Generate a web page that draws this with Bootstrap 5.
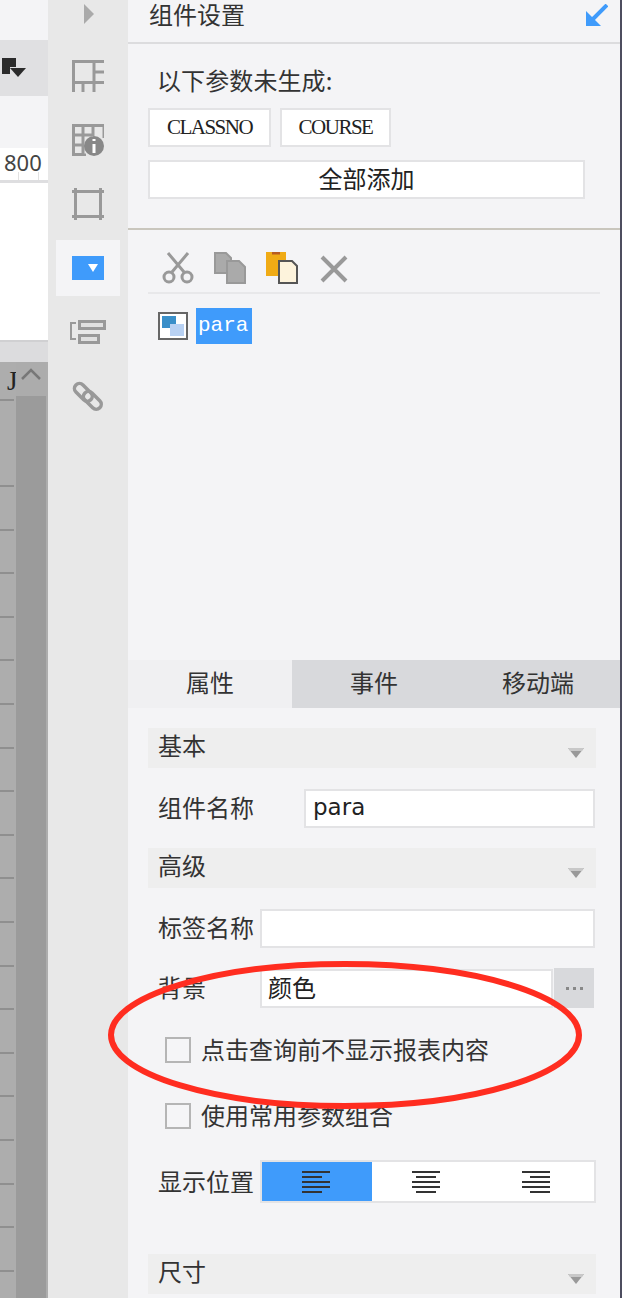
<!DOCTYPE html>
<html lang="zh">
<head>
<meta charset="utf-8">
<title>组件设置</title>
<link href="https://cdn.jsdelivr.net/npm/bootstrap@5.3.0/dist/css/bootstrap.min.css" rel="stylesheet">
<style>
html,body{margin:0;height:1298px;overflow:hidden;background:#f4f4f6}
body{font-family:"Noto Sans CJK SC","Liberation Sans",sans-serif;font-size:24px;color:#333}
.app{width:622px;height:1298px}
svg{display:block;flex:none}
/* left column */
.lc{width:48px;flex:none;background:#f4f4f6}
.lc-tool{height:56px;margin-top:40px;background:#e0e0e2;padding:18px 0 0 2px}
.lc-gap{height:52px}
.lc-ruler{height:35px;font:22px/29px "Noto Sans",sans-serif;color:#444;padding-left:4px;border-bottom:3px solid #dedee0;background:linear-gradient(#e2e2e2,#e2e2e2) 18px 24px/1px 8px no-repeat,linear-gradient(#e2e2e2,#e2e2e2) 38px 24px/1px 8px no-repeat,#fff}
.lc-white{height:157px;background:#fff}
.lc-bar{height:22px;background:#dcdcde;border-top:2px solid #d0d0d2}
.lc-grid{flex:1;background:#adadad}
.lc-names{width:16px;flex:none}
.lc-head{height:39px;border-bottom:2px solid #8f8f8f;width:14px;font:27px/28px "Liberation Serif",serif;color:#222;padding:5px 0 0 7px;overflow:visible;white-space:nowrap}
.lc-tick{height:43.6px;width:14px;border-bottom:2px solid #8f8f8f}
.lc-tick.wide{height:86px}
.lc-track{width:30px;flex:none;background:#9b9b9b}
.lc-up{height:34px;background:#acacac;display:flex;justify-content:center;padding-top:6px}
/* rail */
.rail{width:80px;flex:none;background:#e8e8e8;padding-top:4px}
.rail-cell{display:flex;justify-content:center;height:64px}
.rail-cell.frame{height:52px}
.rail-cell.param{height:60px;padding-top:24px}
.rail-cell.chain{height:auto;padding-top:24px}
.rail-active{width:64px;height:56px;margin-left:8px;background:#f4f4f6;display:flex;align-items:center;justify-content:center}
.mt-tri{padding-left:36px;height:56px}
/* panel */
.panel{width:494px;flex:none;background:#f4f4f6;border-right:2px solid #4d4d5f}
.upper{height:660px}
.hdr{height:44px;border-bottom:2px solid #dcdcde;padding:0 12px 0 21px}
.hdr span{line-height:32px;font-family:"Liberation Sans","Noto Sans CJK SC",sans-serif}
.gen{height:186px;border-bottom:2px solid #c9c6bd;padding:22px 0 0 20px}
.gen-title{line-height:28px;padding-left:9px;margin-bottom:14px;letter-spacing:.1px}
.pbtn{height:39px;border:2px solid #e3e3e5;border-radius:0;background:#fff;color:#222;padding:0;font:21px/33px "Liberation Serif",serif;letter-spacing:-1.5px}
.pbtn:hover{background:#fff;border-color:#e3e3e5;color:#222}
.w-a{width:123px}.w-b{width:111px;margin-left:9px}
.pbtn.all{display:block;width:437px;margin-top:13px;font:24px/31px "Noto Sans CJK SC",sans-serif;letter-spacing:0;padding-bottom:4px}
.tools{margin:22px 20px 0;height:42px;border-bottom:2px solid #e8e8ea;padding-left:14px;gap:20px}
.x-tool{margin:3px 0 0 2px}
.tree{margin:14px 0 0 30px;gap:8px;align-items:center}
.para-sel{width:56px;height:36px;background:#3f9bfb;color:#fff;font:21px/36px "Liberation Mono",monospace;padding-left:2px}
/* tabs */
.ptabs{height:48px;flex-wrap:nowrap}
.ptabs .nav-link{height:48px;width:164px;padding:0;text-align:center;line-height:44px;background:#d8d9dc;color:#333;border-radius:0}
.ptabs .nav-link.active{background:#f0f0f2}
.form-area{padding:20px 24px 0 20px}
.sec{height:40px;background:#eee;padding-left:10px;line-height:33px}
.sec svg{margin-right:12px;margin-top:20px}
.frow{margin-top:20px;height:40px;margin-bottom:20px}
.frow-label{padding:0 0 2px 10px;white-space:nowrap}
.finput{height:39px;border:2px solid #e3e3e5;border-radius:0;background:#fff;color:#222;padding:0 7px 4px;font-size:24px}
.finput:focus{box-shadow:none;border-color:#e3e3e5}
.name-in{width:291px;margin-left:50px;font-family:"DejaVu Sans",sans-serif;font-size:23px;padding-bottom:2px}
.label-in{width:335px;margin-left:6px}
.bg-in{width:293px;margin-left:54px;padding-left:6px}
.more{width:40px;height:40px;margin-left:1px;background:#d8d9dc;display:flex;align-items:center;justify-content:center;gap:4px}
.more i{width:3px;height:3px;background:#888;display:block}
.chk{height:26px;padding-left:17px;gap:10px;margin-bottom:40px;line-height:26px}
.chk span{padding-bottom:3px}
.chk.first{margin-top:29px}
.chk .form-check-input{width:26px;height:26px;margin:0;border:2px solid #b5b5b5;border-radius:0;background-color:#f5f5f7;flex:none}
.pos-row{height:43px;margin-top:-9px}
.pos-group{width:336px;height:43px;margin-left:6px;border:2px solid #e3e3e5;background:#fff}
.pos-group>div{width:110px;display:flex;align-items:center;justify-content:center;padding-right:2px}
.pos-group>.on{background:#3f9bfb}
.last{margin-top:51px}
.ring{position:absolute;left:0;top:0;pointer-events:none}
</style>
</head>
<body>
<div class="app d-flex position-relative">
  <div class="lc d-flex flex-column">
    <div class="lc-tool">
      <svg width="26" height="20" viewBox="0 0 26 20"><path d="M0 0H14V9H8V16H0Z" fill="#2b2b2b"/><path d="M8 10H24L16 19Z" fill="#2b2b2b"/></svg>
    </div>
    <div class="lc-gap"></div>
    <div class="lc-ruler">800</div>
    <div class="lc-white"></div>
    <div class="lc-bar"></div>
    <div class="lc-grid d-flex">
      <div class="lc-names">
        <div class="lc-head">J</div>
        <div class="lc-tick wide"></div>
        <div class="lc-tick"></div><div class="lc-tick"></div><div class="lc-tick"></div><div class="lc-tick"></div><div class="lc-tick"></div><div class="lc-tick"></div><div class="lc-tick"></div><div class="lc-tick"></div><div class="lc-tick"></div><div class="lc-tick"></div><div class="lc-tick"></div><div class="lc-tick"></div><div class="lc-tick"></div><div class="lc-tick"></div><div class="lc-tick"></div><div class="lc-tick"></div><div class="lc-tick"></div><div class="lc-tick"></div>
      </div>
      <div class="lc-track">
        <div class="lc-up"><svg width="20" height="12" viewBox="0 0 20 12"><path d="M1 11L10 2L19 11" fill="none" stroke="#777" stroke-width="2.5"/></svg></div>
      </div>
    </div>
  </div>

  <div class="rail">
    <div class="mt-tri"><svg width="10" height="20" viewBox="0 0 10 20"><path d="M0 0L10 10L0 20Z" fill="#aaa"/></svg></div>
    <div class="rail-cell"><svg width="32" height="32" viewBox="0 0 32 32" fill="none" stroke="#999" stroke-width="3"><path d="M1.500 32V1.500H32M1.500 22.500H32M22 1V32M11 22V32M22 12H32"/></svg></div>
    <div class="rail-cell"><svg width="32" height="32" viewBox="0 0 32 32" fill="none" stroke="#999" stroke-width="3"><path d="M1.500 32V1.500H32V14M1 11H20M1 21H12M11 1V31H14M21 1V12M1 30.500H12"/><circle cx="22" cy="22" r="10" fill="#888" stroke="none"/><path d="M22 15V17M22 20V29" stroke="#fff" stroke-width="3"/></svg></div>
    <div class="rail-cell frame"><svg width="32" height="32" viewBox="0 0 32 32" fill="none" stroke="#999" stroke-width="3"><path d="M0 3.500H32M0 28.500H32M3.500 0V32M28.500 0V32"/></svg></div>
    <div class="rail-active"><svg width="32" height="24" viewBox="0 0 32 24"><rect width="32" height="24" fill="#3f9bfb"/><path d="M16 8H26L21 16Z" fill="#fff"/></svg></div>
    <div class="rail-cell param"><svg width="36" height="24" viewBox="0 0 36 24" fill="none" stroke="#999"><path d="M6 3H1V19H6" stroke-width="2"/><rect x="9.500" y="1.500" width="25" height="7" fill="#e0e0e0" stroke-width="3"/><rect x="9.500" y="15.500" width="19" height="7" fill="#e0e0e0" stroke-width="3"/></svg></div>
    <div class="rail-cell chain"><svg width="32" height="32" viewBox="0 0 32 32" fill="none" stroke="#999" stroke-width="3.500"><rect x="1" y="7" width="21" height="10" rx="5" transform="rotate(45 11 12)"/><rect x="10" y="15" width="21" height="10" rx="5" transform="rotate(45 20 20)"/></svg></div>
  </div>

  <div class="panel">
    <div class="upper">
      <div class="hdr d-flex justify-content-between">
        <span>组件设置</span>
        <svg class="mt-1" width="22" height="22" viewBox="0 0 22 22"><path d="M21 1L5 17" stroke="#3f9bfb" stroke-width="4" fill="none"/><path d="M0 7V22H15Z" fill="#3f9bfb"/></svg>
      </div>
      <div class="gen">
        <div class="gen-title">以下参数未生成:</div>
        <div class="d-flex">
          <button type="button" class="btn pbtn w-a">CLASSNO</button>
          <button type="button" class="btn pbtn w-b">COURSE</button>
        </div>
        <button type="button" class="btn pbtn all">全部添加</button>
      </div>
      <div class="tools d-flex">
        <svg width="32" height="32" viewBox="0 0 32 32" fill="none" stroke="#999" stroke-width="3"><circle cx="7" cy="25" r="5"/><circle cx="25" cy="25" r="5"/><path d="M6 1L22 20M26 1L10 20"/></svg>
        <svg width="32" height="32" viewBox="0 0 32 32" fill="#aaa" stroke="#999" stroke-width="2"><path d="M1 1H12L17 6V21H1Z"/><path d="M13 9H25L31 15V31H13Z"/></svg>
        <svg width="32" height="32" viewBox="0 0 32 32"><rect width="20" height="24" fill="#f0ab15"/><rect x="6" width="8" height="2.500" fill="#b85c20"/><path d="M13 9H26L31 14V31H13Z" fill="#fdf3dc" stroke="#555" stroke-width="2"/></svg>
        <svg class="x-tool" width="28" height="28" viewBox="0 0 28 28"><path d="M2 2L26 26M26 2L2 26" stroke="#999" stroke-width="4"/></svg>
      </div>
      <div class="tree d-flex">
        <svg width="30" height="28" viewBox="0 0 30 28"><rect x="1" y="1" width="28" height="26" fill="#fff" stroke="#666" stroke-width="2"/><rect x="4" y="4" width="14" height="12" fill="#3a8fc9"/><rect x="12" y="12" width="14" height="12" fill="#b8d1f3"/></svg>
        <div class="para-sel">para</div>
      </div>
    </div>

    <nav class="nav ptabs">
      <a class="nav-link active" href="#">属性</a>
      <a class="nav-link" href="#">事件</a>
      <a class="nav-link" href="#">移动端</a>
    </nav>

    <div class="form-area">
      <div class="sec d-flex justify-content-between">基本<svg width="16" height="10" viewBox="0 0 16 10"><path d="M0 0H16L8 10Z" fill="#999"/><path d="M0 0H16L14 3H2Z" fill="#c8c8c8"/></svg></div>
      <div class="frow d-flex align-items-center"><span class="frow-label">组件名称</span><input class="form-control finput name-in" value="para"></div>
      <div class="sec d-flex justify-content-between">高级<svg width="16" height="10" viewBox="0 0 16 10"><path d="M0 0H16L8 10Z" fill="#999"/><path d="M0 0H16L14 3H2Z" fill="#c8c8c8"/></svg></div>
      <div class="frow d-flex align-items-center"><span class="frow-label">标签名称</span><input class="form-control finput label-in" value=""></div>
      <div class="frow d-flex align-items-center"><span class="frow-label">背景</span><input class="form-control finput bg-in" value="颜色"><div class="more"><i></i><i></i><i></i></div></div>
      <div class="chk first d-flex align-items-center"><input class="form-check-input" type="checkbox"><span>点击查询前不显示报表内容</span></div>
      <div class="chk d-flex align-items-center"><input class="form-check-input" type="checkbox"><span>使用常用参数组合</span></div>
      <div class="pos-row d-flex align-items-center">
        <span class="frow-label">显示位置</span>
        <div class="pos-group d-flex">
          <div class="on"><svg width="28" height="22" viewBox="0 0 28 22" fill="#333"><rect width="28" height="2"/><rect y="5" width="20" height="2"/><rect y="10" width="28" height="2"/><rect y="15" width="28" height="2"/><rect y="20" width="20" height="2"/></svg></div>
          <div><svg width="28" height="22" viewBox="0 0 28 22" fill="#333"><rect width="28" height="2"/><rect x="4" y="5" width="20" height="2"/><rect y="10" width="28" height="2"/><rect y="15" width="28" height="2"/><rect x="4" y="20" width="20" height="2"/></svg></div>
          <div><svg width="28" height="22" viewBox="0 0 28 22" fill="#333"><rect width="28" height="2"/><rect x="8" y="5" width="20" height="2"/><rect y="10" width="28" height="2"/><rect y="15" width="28" height="2"/><rect x="8" y="20" width="20" height="2"/></svg></div>
        </div>
      </div>
      <div class="sec last d-flex justify-content-between">尺寸<svg width="16" height="10" viewBox="0 0 16 10"><path d="M0 0H16L8 10Z" fill="#999"/><path d="M0 0H16L14 3H2Z" fill="#c8c8c8"/></svg></div>
    </div>
  </div>

  <svg class="ring" width="622" height="1298" viewBox="0 0 622 1298"><ellipse cx="345" cy="1035" rx="234" ry="71" fill="none" stroke="#ff2d20" stroke-width="6"/></svg>
</div>
</body>
</html>
